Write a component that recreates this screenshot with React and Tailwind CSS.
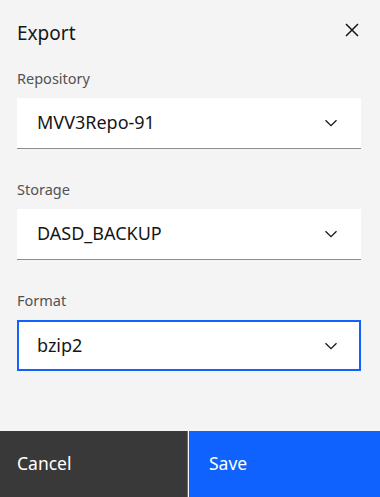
import React from "react";

function Chevron() {
  return (
    <svg width="14" height="8" viewBox="0 0 14 8" fill="none" className="shrink-0">
      <path d="M1.5 1.2L7 6.6L12.5 1.2" stroke="#161616" strokeWidth="1.3" />
    </svg>
  );
}

function Select({ value, focused }) {
  return (
    <div
      className={
        "flex h-[51px] items-center justify-between bg-white " +
        (focused ? "border-2 border-[#0f62fe] pl-[18px] pr-[21px]" : "border-b border-[#8d8d8d] pl-[20px] pr-[23px]")
      }
    >
      <span className="text-[18px] leading-[24px] text-[#161616] pb-[2px]">{value}</span>
      <Chevron />
    </div>
  );
}

function Label({ children, className = "" }) {
  return (
    <div className={"h-[20px] text-[14.5px] leading-[20px] text-[#525252] " + className}>{children}</div>
  );
}

export default function App() {
  return (
    <div
      className="flex h-[497px] w-[380px] flex-col bg-[#f4f4f4]"
      style={{ fontFamily: '"Noto Sans", "Open Sans", sans-serif' }}
    >
      <div className="flex-1 pl-[17px] pr-[19px]">
        <div className="mt-[19px] flex h-[28px] items-center justify-between">
          <span className="text-[19px] leading-[28px] text-[#161616]">Export</span>
          <svg width="14" height="14" viewBox="0 0 14 14" className="mr-[2px] mt-[-6px]" fill="none">
            <path d="M1 1L13 13M13 1L1 13" stroke="#161616" strokeWidth="1.5" />
          </svg>
        </div>
        <Label className="mt-[21px]">Repository</Label>
        <div className="mt-[10px]">
          <Select value="MVV3Repo-91" />
        </div>
        <Label className="mt-[30px]">Storage</Label>
        <div className="mt-[10px]">
          <Select value="DASD_BACKUP" />
        </div>
        <Label className="mt-[30px]">Format</Label>
        <div className="mt-[10px]">
          <Select value="bzip2" focused />
        </div>
      </div>
      <div className="flex h-[66px] gap-[1px]">
        <div className="flex w-[188px] items-start border-r border-[#6f6f6f] bg-[#393939] pl-[17px] pt-[20px] text-[17.5px] leading-[24px] text-white">
          Cancel
        </div>
        <div className="flex flex-1 items-start bg-[#0f62fe] pl-[20px] pt-[20px] text-[17.5px] leading-[24px] text-white">
          Save
        </div>
      </div>
    </div>
  );
}
